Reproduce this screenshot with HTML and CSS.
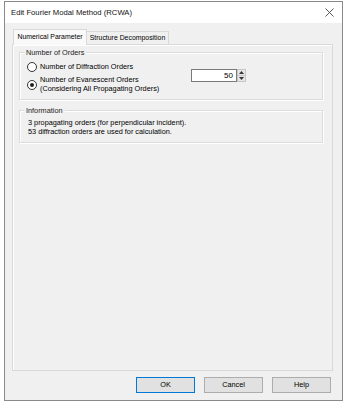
FILE: index.html
```html
<!DOCTYPE html>
<html>
<head>
    <link rel="stylesheet" href="styles.css">
</head>
<body>
    <div class="window">
        <div class="titlebar">
            <div class="title">Edit Fourier Modal Method (RCWA)</div>
            <svg class="close" width="9" height="9" viewBox="0 0 9 9">
                <path d="M0.5 0.5 L8.5 8.5 M8.5 0.5 L0.5 8.5" stroke="#444" stroke-width="0.9" fill="none"/>
            </svg>
        </div>
        <div class="content">
            <div class="tabs">
                <div class="tab active">Numerical Parameter</div>
                <div class="tab second">Structure Decomposition</div>
            </div>
            <div class="panel">
                <div class="group orders">
                    <div class="legend">Number of Orders</div>
                    <div class="orders-body">
                        <div class="radios">
                            <div class="radio-row">
                                <span class="radio"></span>
                                <span>Number of Diffraction Orders</span>
                            </div>
                            <div class="radio-row">
                                <span class="radio checked"></span>
                                <span>Number of Evanescent Orders<br>(Considering All Propagating Orders)</span>
                            </div>
                        </div>
                        <div class="spin">
                            <div class="spin-input">50</div>
                            <div class="spin-btns">
                                <div class="spin-btn">
                                    <svg width="5" height="3" viewBox="0 0 5 3"><path d="M0 3 L2.5 0 L5 3 Z" fill="#333"/></svg>
                                </div>
                                <div class="spin-btn">
                                    <svg width="5" height="3" viewBox="0 0 5 3"><path d="M0 0 L2.5 3 L5 0 Z" fill="#333"/></svg>
                                </div>
                            </div>
                        </div>
                    </div>
                </div>
                <div class="group info">
                    <div class="legend">Information</div>
                    <div class="info-text">
                        3 propagating orders (for perpendicular incident).<br>
                        53 diffraction orders are used for calculation.
                    </div>
                </div>
            </div>
            <div class="buttons">
                <div class="btn default">OK</div>
                <div class="btn">Cancel</div>
                <div class="btn">Help</div>
            </div>
        </div>
    </div>
</body>
</html>
```

FILE: styles.css
```css
* {
    box-sizing: border-box;
}
body {
    margin: 0;
    background: #ffffff;
    font-family: "Liberation Sans", Arial, sans-serif;
    font-size: 7.3px;
    color: #000000;
}
.window {
    margin: 1px 0 0 4px;
    width: 339px;
    height: 400px;
    border: 1px solid #8a8a8a;
    background: #f0f0f0;
    display: flex;
    flex-direction: column;
}
.titlebar {
    height: 21px;
    flex: none;
    background: #ffffff;
    display: flex;
    align-items: center;
    justify-content: space-between;
    padding: 0 8px 0 6px;
}
.title {
    font-size: 7.7px;
    color: #111;
}
.content {
    flex: 1;
    display: flex;
    flex-direction: column;
    padding: 6px 9px 0 7px;
}
.tabs {
    display: flex;
    align-items: flex-end;
    height: 15px;
    flex: none;
    padding-left: 1px;
    font-size: 6.9px;
}
.tab {
    height: 13px;
    line-height: 12px;
    text-align: center;
    border: 1px solid #d9d9d9;
    border-bottom: none;
    background: #f0f0f0;
    white-space: nowrap;
}
.tab.active {
    width: 74px;
    height: 16px;
    line-height: 14px;
    background: #f9f9f9;
    position: relative;
    z-index: 1;
    margin-bottom: -1px;
}
.tab.second {
    width: 82px;
    border-left: none;
}
.panel {
    height: 327px;
    flex: none;
    border: 1px solid #d9d9d9;
    background: #f0f0f0;
    box-shadow: inset 1px 1px 0 #ffffff;
    padding: 7px 9px 0 6px;
}
.group {
    position: relative;
    border: 1px solid #dcdcdc;
    box-shadow: inset 1px 1px 0 #ffffff, 1px 1px 0 #ffffff;
}
.legend {
    position: absolute;
    top: -5px;
    left: 4px;
    padding: 0 2px;
    background: #f0f0f0;
    line-height: 9px;
    color: #222;
}
.orders {
    height: 48px;
}
.orders-body {
    display: flex;
    padding: 9px 0 0 7px;
}
.radios {
    display: flex;
    flex-direction: column;
    gap: 4px;
    width: 164px;
}
.radio-row {
    display: flex;
    align-items: center;
    gap: 3px;
    line-height: 8.5px;
}
.radio {
    width: 10px;
    height: 10px;
    border: 1px solid #333;
    border-radius: 50%;
    background: #fff;
    position: relative;
    flex: none;
}
.radio.checked::after {
    content: "";
    position: absolute;
    left: 2px;
    top: 2px;
    width: 4px;
    height: 4px;
    border-radius: 50%;
    background: #222;
}
.spin {
    display: flex;
    margin-top: 7px;
    height: 13px;
}
.spin-input {
    width: 46px;
    height: 13px;
    border: 1px solid #7a7a7a;
    background: #ffffff;
    text-align: right;
    padding-right: 3px;
    line-height: 11px;
    font-size: 8px;
}
.spin-btns {
    display: flex;
    flex-direction: column;
    width: 9px;
    height: 13px;
}
.spin-btn {
    flex: 1;
    background: #e6e6e6;
    border: 1px solid #c6c6c6;
    display: flex;
    align-items: center;
    justify-content: center;
}
.spin-btn + .spin-btn {
    border-top: none;
}
.info {
    margin-top: 10px;
    height: 33px;
}
.info-text {
    padding: 8px 0 0 8px;
    line-height: 8.5px;
}
.buttons {
    display: flex;
    justify-content: flex-end;
    gap: 9px;
    padding: 6px 2px 0 0;
}
.btn {
    width: 59px;
    height: 16px;
    line-height: 14px;
    text-align: center;
    background: #e1e1e1;
    border: 1px solid #adadad;
}
.btn.default {
    border-color: #0078d7;
}
```
